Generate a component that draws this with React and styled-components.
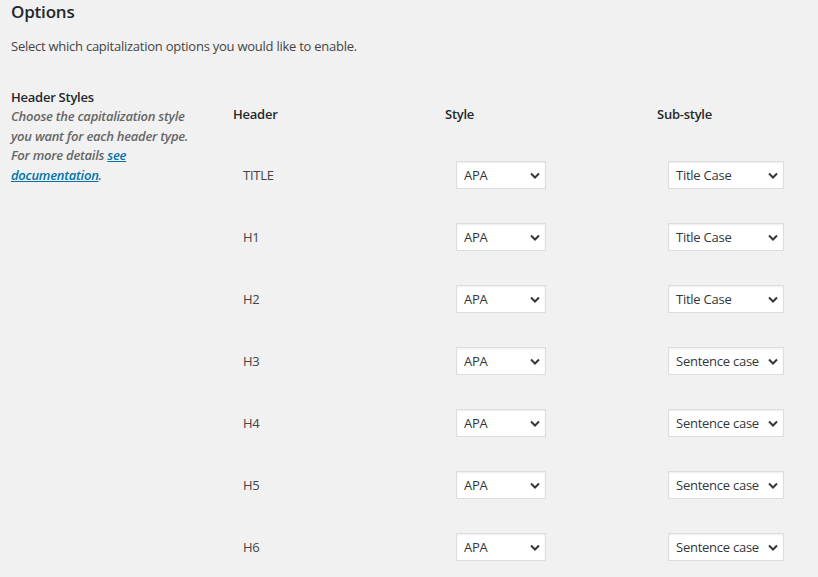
import React from "react";
import styled, { createGlobalStyle } from "styled-components";

const Global = createGlobalStyle`
  html, body { margin: 0; padding: 0; background: #f1f1f1; }
  body {
    font-family: "Open Sans", "Noto Sans", sans-serif;
    font-size: 13px;
    letter-spacing: -0.25px;
    color: #444;
  }
`;

const Page = styled.div`
  padding: 0 11px;
  width: 818px;
  height: 577px;
  box-sizing: border-box;
  overflow: hidden;
`;

const Title = styled.h2`
  margin: 0;
  padding-top: 1px;
  font-size: 17px;
  line-height: 22px;
  font-weight: 600;
  letter-spacing: -0.2px;
  color: #23282d;
`;

const Intro = styled.p`
  margin: 13px 0 0;
  font-size: 13px;
  line-height: 20px;
  color: #444;
`;

const Section = styled.div`
  display: grid;
  grid-template-columns: 222px 1fr;
  margin-top: 31px;
`;

const Side = styled.div`
  display: flex;
  flex-direction: column;
`;

const SideTitle = styled.div`
  font-size: 13px;
  line-height: 20px;
  font-weight: 600;
  color: #23282d;
`;

const SideText = styled.div`
  font-size: 13px;
  line-height: 19.5px;
  font-weight: 600;
  font-style: italic;
  color: #666;
  width: 190px;
`;

const DocLink = styled.a`
  color: #0073aa;
  text-decoration: underline;
`;

const Table = styled.div`
  display: grid;
  grid-template-columns: 212px 212px 1fr;
  margin-top: 7px;
`;

const HeadCell = styled.div`
  height: 60px;
  display: flex;
  align-items: center;
  font-weight: 600;
  font-size: 13px;
  color: #23282d;
  margin-top: -10px;
`;

const Cell = styled.div`
  height: 62px;
  display: flex;
  align-items: center;
  padding-left: ${(p) => p.$indent || 10}px;
`;

const Label = styled.span`
  font-size: 13px;
  color: #444;
`;

const SelectBox = styled.div`
  display: flex;
  align-items: center;
  width: ${(p) => p.$w}px;
  height: 28px;
  box-sizing: border-box;
  background: #fff;
  border: 1px solid #ddd;
  box-shadow: inset 0 1px 2px rgba(0, 0, 0, 0.07);
  padding: 0 5px 0 7px;
`;

const NativeSelect = styled.select`
  appearance: none;
  -webkit-appearance: none;
  border: none;
  background: transparent;
  outline: none;
  flex: 1;
  min-width: 0;
  padding: 0;
  font-family: inherit;
  font-size: 13px;
  letter-spacing: -0.25px;
  color: #32373c;
`;

const Chevron = () => (
  <svg width="10" height="7" viewBox="0 0 10 7" style={{ flex: "none" }}>
    <path d="M1 1.5 L5 5.5 L9 1.5" fill="none" stroke="#32373c" strokeWidth="2" />
  </svg>
);

function Select({ value, options, width }) {
  return (
    <SelectBox $w={width}>
      <NativeSelect defaultValue={value}>
        {options.map((o) => (
          <option key={o}>{o}</option>
        ))}
      </NativeSelect>
      <Chevron />
    </SelectBox>
  );
}

const rows = [
  ["TITLE", "Title Case"],
  ["H1", "Title Case"],
  ["H2", "Title Case"],
  ["H3", "Sentence case"],
  ["H4", "Sentence case"],
  ["H5", "Sentence case"],
  ["H6", "Sentence case"],
];

export default function App() {
  return (
    <Page>
      <Global />
      <Title>Options</Title>
      <Intro>Select which capitalization options you would like to enable.</Intro>
      <Section>
        <Side>
          <SideTitle>Header Styles</SideTitle>
          <SideText>
            Choose the capitalization style you want for each header type. For
            more details <DocLink href="#">see documentation</DocLink>.
          </SideText>
        </Side>
        <Table>
          <HeadCell>Header</HeadCell>
          <HeadCell>Style</HeadCell>
          <HeadCell>Sub-style</HeadCell>
          {rows.map(([h, sub]) => (
            <React.Fragment key={h}>
              <Cell>
                <Label>{h}</Label>
              </Cell>
              <Cell $indent={11}>
                <Select value="APA" options={["APA", "Chicago", "MLA", "AP"]} width={90} />
              </Cell>
              <Cell $indent={11}>
                <Select value={sub} options={["Title Case", "Sentence case"]} width={116} />
              </Cell>
            </React.Fragment>
          ))}
        </Table>
      </Section>
    </Page>
  );
}
